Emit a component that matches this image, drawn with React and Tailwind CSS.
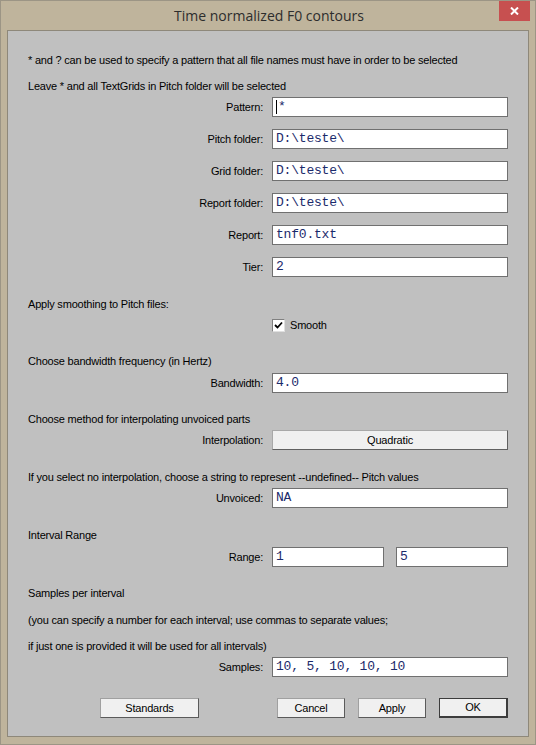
import React from "react";

const Field = ({ label, value, cursor }) => (
  <div className="flex items-center h-[20px]">
    <div className="w-[236px] text-right pr-[1px]">{label}</div>
    <div className="ml-[8px] w-[236px] h-[20px] bg-white border border-[#707070] flex items-center pl-[3px] font-['Liberation_Mono',monospace] text-[13px] text-[#1b2a6b]">
      {cursor && <span className="w-[1px] h-[14px] bg-black mr-[1px]" />}
      {value}
    </div>
  </div>
);

const Line = ({ children, className = "" }) => (
  <div className={`h-[16px] leading-[16px] ${className}`}>{children}</div>
);

const Btn = ({ children, w, def }) => (
  <button
    className={`h-[20px] ${w} bg-[#f0f0f0] text-[11px] text-black flex items-center justify-center border ${
      def
        ? "border-[#3c3c3c] border-b-2 border-r-2"
        : "border-[#a0a0a0] border-b-[#5a5a5a] border-r-[#5a5a5a]"
    }`}
  >
    {children}
  </button>
);

export default function App() {
  return (
    <div className="w-[536px] h-[745px] bg-[#bfb49c] border border-[#9c9585] flex flex-col font-['Liberation_Sans',Arial,sans-serif] text-[11px] tracking-[-0.2px] text-black">
      {/* title bar */}
      <div className="relative h-[29px] flex items-center justify-center">
        <span className="font-['Open_Sans',sans-serif] text-[14px] tracking-normal text-[#2d2d2d] ml-[2px]">
          Time normalized F0 contours
        </span>
        <div className="absolute top-0 right-[5px] w-[31px] h-[20px] bg-[#c75050] flex items-center justify-center">
          <svg width="9" height="8" viewBox="0 0 9 8">
            <path d="M1 0.5 L8 7.5 M8 0.5 L1 7.5" stroke="white" strokeWidth="2" />
          </svg>
        </div>
      </div>

      {/* dialog body */}
      <div className="mx-[6px] h-[707px] border border-[#8e887a] bg-[#c0c0c0] pl-[20px] pt-[21px] flex flex-col">
        <Line>* and ? can be used to specify a pattern that all file names must have in order to be selected</Line>
        <Line className="mt-[10px]">Leave * and all TextGrids in Pitch folder will be selected</Line>
        <div className="mt-[3px]">
          <Field label="Pattern:" value="*" cursor />
        </div>
        <div className="mt-[12px]">
          <Field label="Pitch folder:" value="D:\teste\" />
        </div>
        <div className="mt-[12px]">
          <Field label="Grid folder:" value="D:\teste\" />
        </div>
        <div className="mt-[12px]">
          <Field label="Report folder:" value="D:\teste\" />
        </div>
        <div className="mt-[12px]">
          <Field label="Report:" value="tnf0.txt" />
        </div>
        <div className="mt-[12px]">
          <Field label="Tier:" value="2" />
        </div>

        <Line className="mt-[19px]">Apply smoothing to Pitch files:</Line>
        <div className="mt-[3px] h-[20px] flex items-center pl-[244px]">
          <div className="w-[13px] h-[13px] bg-white border border-[#808080] border-b-[#e0e0e0] border-r-[#e0e0e0] flex items-center justify-center">
            <svg width="9" height="9" viewBox="0 0 9 9">
              <path d="M1 4 L3.5 6.5 L8 1.5" stroke="black" strokeWidth="1.8" fill="none" />
            </svg>
          </div>
          <span className="ml-[5px]">Smooth</span>
        </div>

        <Line className="mt-[18px]">Choose bandwidth frequency (in Hertz)</Line>
        <div className="mt-[4px]">
          <Field label="Bandwidth:" value="4.0" />
        </div>

        <Line className="mt-[18px]">Choose method for interpolating unvoiced parts</Line>
        <div className="mt-[3px] flex items-center h-[20px]">
          <div className="w-[236px] text-right pr-[1px]">Interpolation:</div>
          <div className="ml-[8px] w-[236px] h-[20px] bg-[#f0f0f0] border border-[#a8a8a8] border-b-[#606060] border-r-[#606060] flex items-center justify-center">
            Quadratic
          </div>
        </div>

        <Line className="mt-[19px]">If you select no interpolation, choose a string to represent --undefined-- Pitch values</Line>
        <div className="mt-[3px]">
          <Field label="Unvoiced:" value="NA" />
        </div>

        <Line className="mt-[19px]">Interval Range</Line>
        <div className="mt-[4px] flex items-center h-[20px]">
          <div className="w-[236px] text-right pr-[1px]">Range:</div>
          <div className="ml-[8px] w-[112px] h-[20px] bg-white border border-[#707070] flex items-center pl-[3px] font-['Liberation_Mono',monospace] text-[13px] text-[#1b2a6b]">
            1
          </div>
          <div className="ml-[12px] w-[112px] h-[20px] bg-white border border-[#707070] flex items-center pl-[3px] font-['Liberation_Mono',monospace] text-[13px] text-[#1b2a6b]">
            5
          </div>
        </div>

        <Line className="mt-[18px]">Samples per interval</Line>
        <Line className="mt-[11px]">(you can specify a number for each interval; use commas to separate values;</Line>
        <Line className="mt-[10px]">if just one is provided it will be used for all intervals)</Line>
        <div className="mt-[3px]">
          <Field label="Samples:" value="10, 5, 10, 10, 10" />
        </div>

        <div className="mt-[21px] flex items-center h-[20px]">
          <div className="ml-[72px]">
            <Btn w="w-[99px]">Standards</Btn>
          </div>
          <div className="ml-[78px]">
            <Btn w="w-[68px]">Cancel</Btn>
          </div>
          <div className="ml-[13px]">
            <Btn w="w-[68px]">Apply</Btn>
          </div>
          <div className="ml-[13px]">
            <Btn w="w-[69px]" def>
              OK
            </Btn>
          </div>
        </div>
      </div>
    </div>
  );
}
